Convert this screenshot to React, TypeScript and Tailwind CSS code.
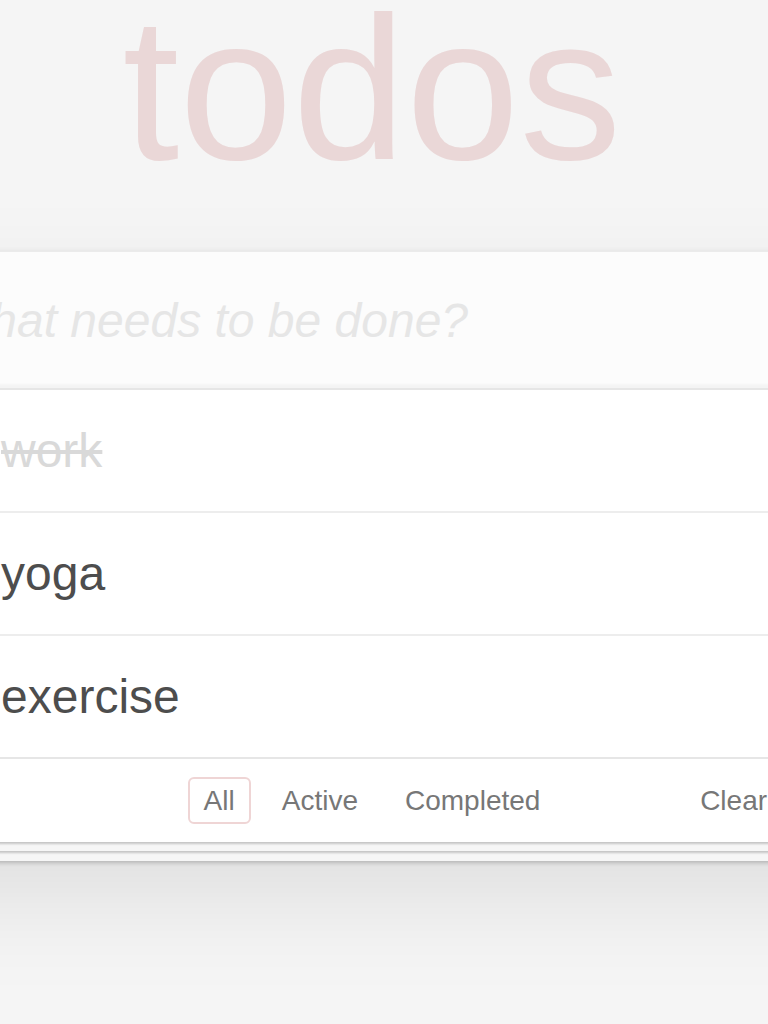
import React from 'react';

type Todo = { id: number; title: string; completed: boolean };

const todos: Todo[] = [
  { id: 1, title: 'work', completed: true },
  { id: 2, title: 'yoga', completed: false },
  { id: 3, title: 'exercise', completed: false },
];

const filters = ['All', 'Active', 'Completed'];

export default function App() {
  const left = todos.filter((t) => !t.completed).length;

  return (
    <div
      className="w-[768px] min-h-[1024px] overflow-hidden bg-[#f5f5f5] text-[#4d4d4d]"
      style={{ fontFamily: '"Liberation Sans", Arial, Helvetica, sans-serif' }}
    >
      <div className="w-[1124px] ml-[-190px]">
        {/* Title */}
        <div className="h-[251px]">
          <h1 className="text-center text-[204px] leading-[176px] font-normal text-[#ead7d7]">todos</h1>
        </div>

        {/* App panel */}
        <section className="bg-white shadow-[0_4px_8px_0_rgba(0,0,0,0.2),0_50px_100px_0_rgba(0,0,0,0.1)]">
          <input
            className="block w-full h-[137px] pl-[135px] pr-8 bg-[#fcfcfc] text-[48px] outline-none shadow-[inset_0_-4px_2px_rgba(0,0,0,0.03)] border-t border-[#ebebeb] placeholder:italic placeholder:text-[#e6e6e6]"
            placeholder="What needs to be done?"
          />

          <ul className="border-t-2 border-[#e6e6e6]">
            {todos.map((todo, i) => (
              <li
                key={todo.id}
                className={`flex items-center pl-[191px] text-[48px] ${
                  i < todos.length - 1 ? 'h-[123px] border-b-2 border-[#ededed]' : 'h-[121px]'
                }`}
              >
                <span className={todo.completed ? 'text-[#d9d9d9] line-through' : 'text-[#4d4d4d]'}>
                  {todo.title}
                </span>
              </li>
            ))}
          </ul>

          {/* Footer */}
          <footer className="grid grid-cols-[1fr_auto_1fr] items-center h-[85px] px-[30px] border-t-2 border-[#e6e6e6] text-[28px] text-[#777777] shadow-[0_2px_2px_rgba(0,0,0,0.2),0_17px_0_-8px_#f6f6f6,0_19px_2px_-8px_rgba(0,0,0,0.2),0_35px_0_-16px_#f6f6f6,0_37px_4px_-16px_rgba(0,0,0,0.2)]">
            <span>{left} items left</span>
            <div className="flex gap-[15px]">
              {filters.map((f) => (
                <a
                  key={f}
                  className={`px-[14px] py-[6px] leading-[31px] rounded-[6px] border-2 ${
                    f === 'All' ? 'border-[#efd5d5]' : 'border-transparent'
                  }`}
                >
                  {f}
                </a>
              ))}
            </div>
            <span className="justify-self-end">Clear completed</span>
          </footer>
        </section>
      </div>
    </div>
  );
}
